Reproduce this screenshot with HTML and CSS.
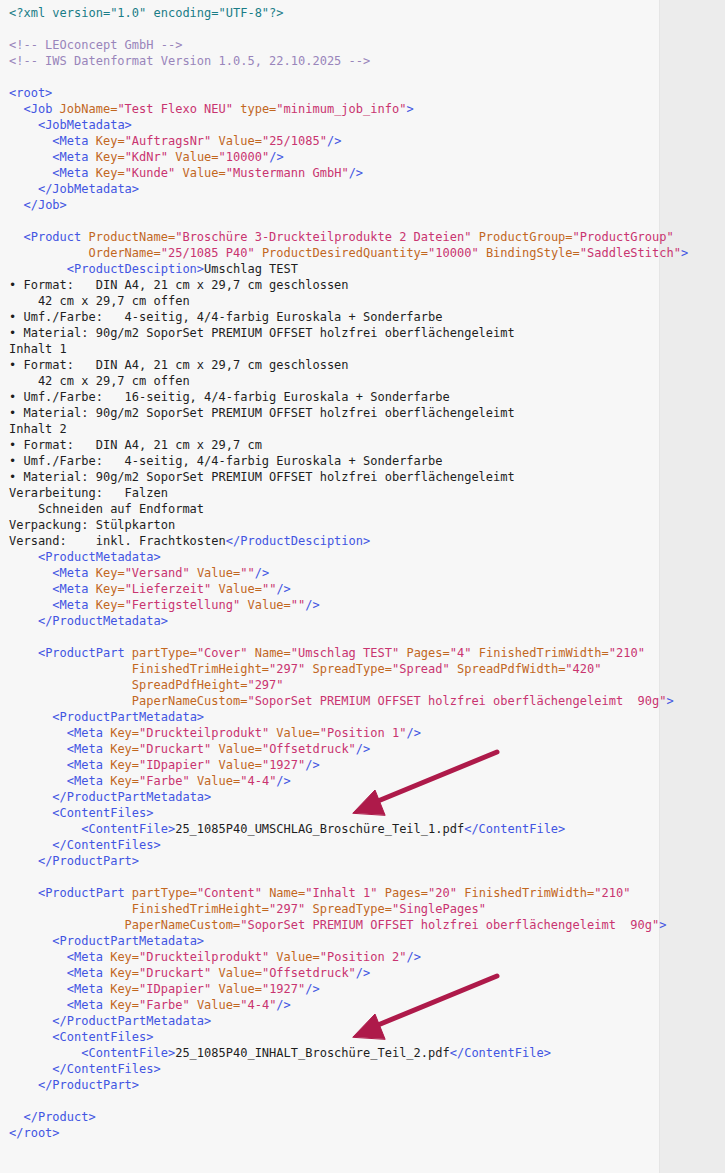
FILE: index.html
```html
<!DOCTYPE html>
<html>
<head>
    <title>IWS Datenformat</title>
    <link rel="stylesheet" href="styles.css">
</head>
<body>
    <div class="viewer">
        <pre class="source"><span class="d">&lt;?xml version="1.0" encoding="UTF-8"?&gt;</span>

<span class="c">&lt;!-- LEOconcept GmbH --&gt;</span>
<span class="c">&lt;!-- IWS Datenformat Version 1.0.5, 22.10.2025 --&gt;</span>

<span class="t">&lt;root&gt;</span>
  <span class="t">&lt;Job</span> <span class="a">JobName=</span><span class="v">"Test Flexo NEU"</span> <span class="a">type=</span><span class="v">"minimum_job_info"</span><span class="t">&gt;</span>
    <span class="t">&lt;JobMetadata&gt;</span>
      <span class="t">&lt;Meta</span> <span class="a">Key=</span><span class="v">"AuftragsNr"</span> <span class="a">Value=</span><span class="v">"25/1085"</span><span class="t">/&gt;</span>
      <span class="t">&lt;Meta</span> <span class="a">Key=</span><span class="v">"KdNr"</span> <span class="a">Value=</span><span class="v">"10000"</span><span class="t">/&gt;</span>
      <span class="t">&lt;Meta</span> <span class="a">Key=</span><span class="v">"Kunde"</span> <span class="a">Value=</span><span class="v">"Mustermann GmbH"</span><span class="t">/&gt;</span>
    <span class="t">&lt;/JobMetadata&gt;</span>
  <span class="t">&lt;/Job&gt;</span>

  <span class="t">&lt;Product</span> <span class="a">ProductName=</span><span class="v">"Broschüre 3-Druckteilprodukte 2 Dateien"</span> <span class="a">ProductGroup=</span><span class="v">"ProductGroup"</span>
           <span class="a">OrderName=</span><span class="v">"25/1085 P40"</span> <span class="a">ProductDesiredQuantity=</span><span class="v">"10000"</span> <span class="a">BindingStyle=</span><span class="v">"SaddleStitch"</span><span class="t">&gt;</span>
        <span class="t">&lt;ProductDesciption&gt;</span>Umschlag TEST
• Format:   DIN A4, 21 cm x 29,7 cm geschlossen
    42 cm x 29,7 cm offen
• Umf./Farbe:   4-seitig, 4/4-farbig Euroskala + Sonderfarbe
• Material: 90g/m2 SoporSet PREMIUM OFFSET holzfrei oberflächengeleimt
Inhalt 1
• Format:   DIN A4, 21 cm x 29,7 cm geschlossen
    42 cm x 29,7 cm offen
• Umf./Farbe:   16-seitig, 4/4-farbig Euroskala + Sonderfarbe
• Material: 90g/m2 SoporSet PREMIUM OFFSET holzfrei oberflächengeleimt
Inhalt 2
• Format:   DIN A4, 21 cm x 29,7 cm
• Umf./Farbe:   4-seitig, 4/4-farbig Euroskala + Sonderfarbe
• Material: 90g/m2 SoporSet PREMIUM OFFSET holzfrei oberflächengeleimt
Verarbeitung:   Falzen
    Schneiden auf Endformat
Verpackung: Stülpkarton
Versand:    inkl. Frachtkosten<span class="t">&lt;/ProductDesciption&gt;</span>
    <span class="t">&lt;ProductMetadata&gt;</span>
      <span class="t">&lt;Meta</span> <span class="a">Key=</span><span class="v">"Versand"</span> <span class="a">Value=</span><span class="v">""</span><span class="t">/&gt;</span>
      <span class="t">&lt;Meta</span> <span class="a">Key=</span><span class="v">"Lieferzeit"</span> <span class="a">Value=</span><span class="v">""</span><span class="t">/&gt;</span>
      <span class="t">&lt;Meta</span> <span class="a">Key=</span><span class="v">"Fertigstellung"</span> <span class="a">Value=</span><span class="v">""</span><span class="t">/&gt;</span>
    <span class="t">&lt;/ProductMetadata&gt;</span>

    <span class="t">&lt;ProductPart</span> <span class="a">partType=</span><span class="v">"Cover"</span> <span class="a">Name=</span><span class="v">"Umschlag TEST"</span> <span class="a">Pages=</span><span class="v">"4"</span> <span class="a">FinishedTrimWidth=</span><span class="v">"210"</span>
                 <span class="a">FinishedTrimHeight=</span><span class="v">"297"</span> <span class="a">SpreadType=</span><span class="v">"Spread"</span> <span class="a">SpreadPdfWidth=</span><span class="v">"420"</span>
                 <span class="a">SpreadPdfHeight=</span><span class="v">"297"</span>
                 <span class="a">PaperNameCustom=</span><span class="v">"SoporSet PREMIUM OFFSET holzfrei oberflächengeleimt  90g"</span><span class="t">&gt;</span>
      <span class="t">&lt;ProductPartMetadata&gt;</span>
        <span class="t">&lt;Meta</span> <span class="a">Key=</span><span class="v">"Druckteilprodukt"</span> <span class="a">Value=</span><span class="v">"Position 1"</span><span class="t">/&gt;</span>
        <span class="t">&lt;Meta</span> <span class="a">Key=</span><span class="v">"Druckart"</span> <span class="a">Value=</span><span class="v">"Offsetdruck"</span><span class="t">/&gt;</span>
        <span class="t">&lt;Meta</span> <span class="a">Key=</span><span class="v">"IDpapier"</span> <span class="a">Value=</span><span class="v">"1927"</span><span class="t">/&gt;</span>
        <span class="t">&lt;Meta</span> <span class="a">Key=</span><span class="v">"Farbe"</span> <span class="a">Value=</span><span class="v">"4-4"</span><span class="t">/&gt;</span>
      <span class="t">&lt;/ProductPartMetadata&gt;</span>
      <span class="t">&lt;ContentFiles&gt;</span>
          <span class="t">&lt;ContentFile&gt;</span>25_1085P40_UMSCHLAG_Broschüre_Teil_1.pdf<span class="t">&lt;/ContentFile&gt;</span>
      <span class="t">&lt;/ContentFiles&gt;</span>
    <span class="t">&lt;/ProductPart&gt;</span>

    <span class="t">&lt;ProductPart</span> <span class="a">partType=</span><span class="v">"Content"</span> <span class="a">Name=</span><span class="v">"Inhalt 1"</span> <span class="a">Pages=</span><span class="v">"20"</span> <span class="a">FinishedTrimWidth=</span><span class="v">"210"</span>
                 <span class="a">FinishedTrimHeight=</span><span class="v">"297"</span> <span class="a">SpreadType=</span><span class="v">"SinglePages"</span>
                <span class="a">PaperNameCustom=</span><span class="v">"SoporSet PREMIUM OFFSET holzfrei oberflächengeleimt  90g"</span><span class="t">&gt;</span>
      <span class="t">&lt;ProductPartMetadata&gt;</span>
        <span class="t">&lt;Meta</span> <span class="a">Key=</span><span class="v">"Druckteilprodukt"</span> <span class="a">Value=</span><span class="v">"Position 2"</span><span class="t">/&gt;</span>
        <span class="t">&lt;Meta</span> <span class="a">Key=</span><span class="v">"Druckart"</span> <span class="a">Value=</span><span class="v">"Offsetdruck"</span><span class="t">/&gt;</span>
        <span class="t">&lt;Meta</span> <span class="a">Key=</span><span class="v">"IDpapier"</span> <span class="a">Value=</span><span class="v">"1927"</span><span class="t">/&gt;</span>
        <span class="t">&lt;Meta</span> <span class="a">Key=</span><span class="v">"Farbe"</span> <span class="a">Value=</span><span class="v">"4-4"</span><span class="t">/&gt;</span>
      <span class="t">&lt;/ProductPartMetadata&gt;</span>
      <span class="t">&lt;ContentFiles&gt;</span>
          <span class="t">&lt;ContentFile&gt;</span>25_1085P40_INHALT_Broschüre_Teil_2.pdf<span class="t">&lt;/ContentFile&gt;</span>
      <span class="t">&lt;/ContentFiles&gt;</span>
    <span class="t">&lt;/ProductPart&gt;</span>

  <span class="t">&lt;/Product&gt;</span>
<span class="t">&lt;/root&gt;</span></pre>
        <!-- annotation arrows -->
        <svg class="arrows" width="659" height="1173" viewBox="0 0 659 1173">
            <g fill="#ae1a4a" stroke="#ae1a4a" stroke-linecap="round">
                <line x1="497" y1="752" x2="378" y2="801" stroke-width="5"/>
                <polygon points="353,813 375,790 385,815" stroke-width="1" stroke-linejoin="round"/>
                <line x1="497" y1="976" x2="378" y2="1025" stroke-width="5"/>
                <polygon points="353,1037 375,1014 385,1039" stroke-width="1" stroke-linejoin="round"/>
            </g>
        </svg>
    </div>
    <div class="gutter"></div>
</body>
</html>
```

FILE: styles.css
```css
body {
    margin: 0;
    padding: 0;
    height: 100vh;
    display: flex;
    background-color: #f7f7f7;
    overflow: hidden;
}

.viewer {
    flex: 1;
    min-width: 0;
    position: relative;
    z-index: 1;
}

.source {
    margin: 0;
    padding: 5px 0 0 9px;
    font-family: "DejaVu Sans Mono", "Liberation Mono", monospace;
    font-size: 12px;
    line-height: 16px;
    color: #1e1e1e;
    white-space: pre;
}

/* syntax colours */
.d { color: #1a7d87; }
.c { color: #9985bb; }
.t { color: #4255e2; }
.a { color: #c2671f; }
.v { color: #c93470; }

.arrows {
    position: absolute;
    top: 0;
    left: 0;
    pointer-events: none;
}

.gutter {
    width: 65px;
    flex-shrink: 0;
    background-color: #ececec;
    border-left: 1px solid #e5e5e5;
}
```
